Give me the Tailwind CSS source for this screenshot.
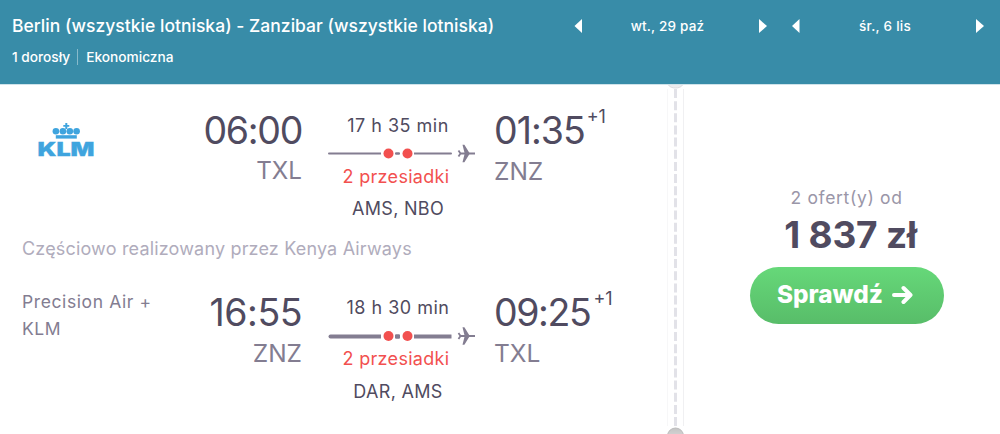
<!DOCTYPE html>
<html lang="pl">
<head>
  <meta charset="UTF-8" />
  <meta name="viewport" content="width=device-width, initial-scale=1.0"/>
  <title>Berlin - Zanzibar</title>
  <script src="https://cdn.jsdelivr.net/npm/@tailwindcss/browser@4"></script>
</head>
<body class="w-[1000px] h-[434px] overflow-hidden bg-white font-['Inter','Liberation_Sans',sans-serif] text-[#504b60] flex flex-col">

  <header class="h-[85px] shrink-0 bg-[#388ca8] border-b border-[#cfe3ea] text-white flex">
    <div class="w-[572px] pl-3 pt-3">
      <h1 class="text-[17.5px] leading-7 tracking-[0.02px] font-medium whitespace-nowrap">Berlin (wszystkie lotniska) - Zanzibar (wszystkie lotniska)</h1>
      <div class="mt-[7px] flex items-center text-[13.7px] leading-5 font-medium">
        <span>1 dorosły</span>
        <span class="w-px h-4 bg-white/40 ml-[7px] mr-2"></span>
        <span>Ekonomiczna</span>
      </div>
    </div>
    <div class="flex gap-6 pt-[18px]">
      <div class="w-[195px] h-4 pl-[2px] flex items-center justify-between text-[13.5px] tracking-[0.2px] font-medium">
        <svg class="w-2 h-4" viewBox="0 0 8 16"><path d="M8 1v14L.5 8z" fill="#fff"/></svg>
        <span class="pr-1.5">wt., 29 paź</span>
        <svg class="w-2 h-4" viewBox="0 0 8 16"><path d="M0 1v14l8-7z" fill="#fff"/></svg>
      </div>
      <div class="w-[193px] h-4 pl-px flex items-center justify-between text-[13.5px] tracking-[0.25px] font-medium">
        <svg class="w-2 h-4" viewBox="0 0 8 16"><path d="M7.500 1v14L0 8z" fill="#fff"/></svg>
        <span class="pr-1.5">śr., 6 lis</span>
        <svg class="w-2 h-4" viewBox="0 0 8 16"><path d="M0 1v14l8-7z" fill="#fff"/></svg>
      </div>
    </div>
  </header>

  <main class="flex flex-1">
    <section class="w-[667px] pt-[25px]">

      <!-- outbound -->
      <div class="flex h-[124px]">
        <div class="w-[180px] pl-[38px] pt-3">
          <svg class="w-[57px] h-[36px] overflow-visible" viewBox="0 0 57 36" fill="#3fa4de">
            <path d="M27.300 1h2v2h2v1.700h-2V7h-2V4.700h-2V3h2z"/>
            <circle cx="17.900" cy="9.300" r="3.300"/>
            <circle cx="24.900" cy="9.300" r="3.300"/>
            <circle cx="31.800" cy="9.300" r="3.300"/>
            <circle cx="38.600" cy="9.300" r="3.300"/>
            <rect x="17.800" y="13.200" width="21" height="3.400"/>
            <text x="-0.500" y="33.600" font-family="Inter" font-size="19.200" font-weight="900" stroke="#3fa4de" stroke-width="0.300" textLength="57" lengthAdjust="spacingAndGlyphs">KLM</text>
          </svg>
        </div>
        <div class="w-[122px] text-right">
          <div class="text-[37.5px] leading-[41px] tracking-[-1.3px]">06:00</div>
          <div class="text-[24.2px] leading-10 text-[#837d91]">TXL</div>
        </div>
        <div class="w-[140px] ml-[26px] text-center text-[18px] tracking-[0.3px]">
          <div class="leading-8 tracking-[0.5px]">17 h 35 min</div>
          <svg class="w-[150px] h-[22px]" viewBox="0 0 150 22">
            <path d="M1 11.500h122" stroke="#837d91" stroke-width="2" stroke-linecap="round"/>
            <path d="M53 5h14v12H53zM72 5h14v12H72z" fill="#fff"/>
            <path d="M68 11.500h3" stroke="#837d91" stroke-width="2"/>
            <circle cx="60.500" cy="11.500" r="5" fill="#f2504f"/>
            <circle cx="79.500" cy="11.500" r="5" fill="#f2504f"/>
            <path d="M130.500 8.500L132.500 11.500L130.500 14.500M132 11.500H147" fill="none" stroke="#837d91" stroke-width="1.800"/>
            <path d="M134.500 2.800h1.900l5.400 8.700-5.400 8.700h-1.900l2.200-8.700z" fill="#837d91"/>
          </svg>
          <div class="leading-[26px] -ml-1 text-[#f2504f]">2 przesiadki</div>
          <div class="leading-[38px]">AMS, NBO</div>
        </div>
        <div class="ml-[26px]">
          <div class="flex text-[37.5px] leading-[41px] tracking-[-1px]">01:35<sup class="text-[18px] leading-[14px] tracking-normal top-0 ml-0.5">+1</sup></div>
          <div class="text-[24.5px] leading-10 text-[#837d91]">ZNZ</div>
        </div>
      </div>

      <p class="pl-[22px] h-[58px] text-[18px] leading-[29px] tracking-[0.17px] text-[#b0acbc]">Częściowo realizowany przez Kenya Airways</p>

      <!-- return -->
      <div class="flex">
        <div class="w-[180px] pl-[22px] text-[17.5px] leading-[27px] tracking-[0.6px] text-[#837d91]">
          <div class="-mt-[4px]">Precision Air +<br>KLM</div>
        </div>
        <div class="w-[122px] text-right">
          <div class="text-[37.5px] leading-[41px] tracking-[-0.5px]">16:55</div>
          <div class="text-[24.5px] leading-10 text-[#837d91]">ZNZ</div>
        </div>
        <div class="w-[140px] ml-[26px] text-center text-[18px] tracking-[0.3px]">
          <div class="leading-8 tracking-[0.5px]">18 h 30 min</div>
          <svg class="w-[150px] h-[22px]" viewBox="0 0 150 22">
            <path d="M2.500 12.500h121" stroke="#837d91" stroke-width="4" stroke-linecap="round"/>
            <path d="M53 5h14v12H53zM72 5h14v12H72zM123.500 9h3v7h-3z" fill="#fff"/>
            <path d="M68 12.500h3" stroke="#837d91" stroke-width="4"/>
            <circle cx="60.500" cy="12" r="5" fill="#f2504f"/>
            <circle cx="79.500" cy="12" r="5" fill="#f2504f"/>
            <path d="M130.500 9L132.500 12L130.500 15M132 12H147" fill="none" stroke="#837d91" stroke-width="1.800"/>
            <path d="M134.500 3.300h1.900l5.400 8.700-5.400 8.700h-1.900l2.200-8.700z" fill="#837d91"/>
          </svg>
          <div class="leading-[26px] -ml-1 text-[#f2504f]">2 przesiadki</div>
          <div class="leading-10">DAR, AMS</div>
        </div>
        <div class="ml-[26px]">
          <div class="flex text-[37.5px] leading-[41px] tracking-[-1.4px]">09:25<sup class="text-[18px] leading-[14px] tracking-normal top-0 ml-[3px]">+1</sup></div>
          <div class="text-[24.5px] leading-10 text-[#837d91]">TXL</div>
        </div>
      </div>
    </section>

    <!-- perforated edge -->
    <svg class="w-[17px] h-[349px]" viewBox="0 0 17 349">
      <defs>
        <linearGradient id="notch" x1="0" y1="0" x2="0" y2="1">
          <stop offset="0" stop-color="#c4c4c4"/>
          <stop offset="1" stop-color="#e4e4e4"/>
        </linearGradient>
      </defs>
      <path d="M0 4v337M16.500 4v337" stroke="#f0f0f2"/>
      <path d="M8.500 4v337" stroke="#e2e2e8" stroke-width="3" stroke-dasharray="9 3.150"/>
      <path d="M1.500 0c2 4 12 4 14 0" fill="#ececee" stroke="#dcdce0"/>
      <circle cx="8.500" cy="351" r="8" fill="url(#notch)" stroke="#bdbdbd"/>
    </svg>

    <aside class="flex-1 flex flex-col items-center pt-[99px]">
      <div class="text-[17.5px] leading-7 tracking-[0.65px] text-[#9a96a8] pl-[9px]">2 ofert(y) od</div>
      <div class="text-[37px] leading-[45px] tracking-[-0.2px] font-bold pl-[17px]">1 837 zł</div>
      <button class="mt-[9.5px] ml-[10px] w-[194px] h-[57px] rounded-full bg-linear-to-b from-[#66d879] to-[#58bd69] text-white text-[24.3px] font-extrabold flex items-center justify-center gap-[9px] pr-1">
        <span class="-mt-px">Sprawdź</span>
        <svg class="w-[21px] h-5" viewBox="0 0 21 20" fill="none" stroke="#fff" stroke-width="4" stroke-linecap="round" stroke-linejoin="round"><path d="M2 10h16M11.500 3l7 7-7 7"/></svg>
      </button>
    </aside>
  </main>

</body>
</html>
